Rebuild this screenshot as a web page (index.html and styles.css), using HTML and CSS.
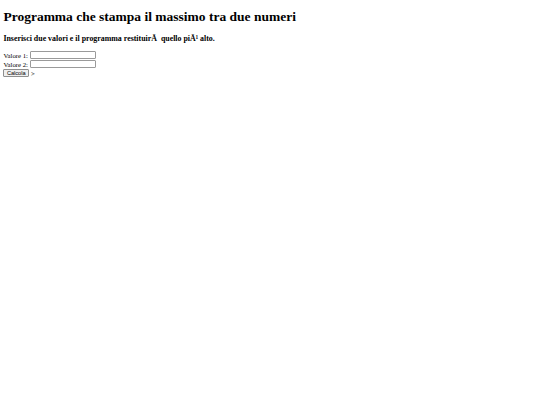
FILE: index.html
```html
<!DOCTYPE html>
<html>
<head>
<meta charset="utf-8">
<title>Massimo</title>
<link rel="stylesheet" href="styles.css">
</head>
<body>
<h1 class="title">Programma che stampa il massimo tra due numeri</h1>
<h3 class="subtitle">Inserisci due valori e il programma restituirÃ&nbsp; quello piÃ¹ alto.</h3>
<form class="form">
  <div class="row"><span class="label">Valore 1:</span><input type="text" class="field"></div>
  <div class="row"><span class="label">Valore 2:</span><input type="text" class="field"></div>
  <div class="row"><button type="button" class="btn">Calcola</button><span class="after">&gt;</span></div>
</form>
</body>
</html>
```
FILE: styles.css
```css
body {
  margin: 3.4px;
  font-family: "Liberation Serif", "Times New Roman", serif;
  color: #000;
  background: #fff;
}
.title {
  font-size: 13.5px;
  font-weight: bold;
  line-height: 15.5px;
  margin: 5.6px 0 0;
}
.subtitle {
  font-size: 7.9px;
  font-weight: bold;
  line-height: 9px;
  margin: 9.5px 0 0;
}
.form {
  margin: 8px 0 0;
}
.row {
  display: flex;
  align-items: center;
  height: 9px;
  font-size: 6.75px;
}
.label {
  margin-right: 1.6px;
}
.field {
  box-sizing: border-box;
  width: 66px;
  height: 8px;
  margin: 0;
  padding: 0;
  border: 1px solid #9a9a9a;
  border-radius: 1px;
  background: #fff;
  font-family: "Liberation Sans", Arial, sans-serif;
  font-size: 5.6px;
}
.btn {
  box-sizing: border-box;
  height: 8px;
  margin: 0;
  padding: 0 2.5px;
  border: 1px solid #8f8f8f;
  border-radius: 1px;
  background: #efefef;
  font-family: "Liberation Sans", Arial, sans-serif;
  font-size: 5.6px;
  line-height: 6px;
  color: #000;
}
.after {
  margin-left: 2px;
}
```
